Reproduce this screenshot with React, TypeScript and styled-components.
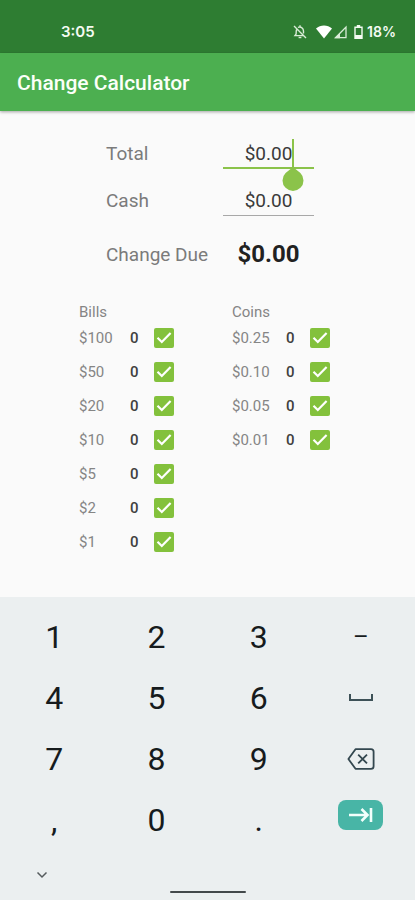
import React, { useState } from "react";
import styled, { createGlobalStyle } from "styled-components";

const GlobalStyle = createGlobalStyle`
  *, *::before, *::after { box-sizing: border-box; }
  body {
    margin: 0;
    background: #fafafa;
    color: #212121;
    font-family: Roboto, "Noto Sans", sans-serif;
  }
  button, input { font: inherit; color: inherit; }
`;

const Screen = styled.div`
  display: flex;
  flex-direction: column;
  min-height: 100vh;
`;

const StatusBar = styled.div`
  display: flex;
  align-items: center;
  justify-content: space-between;
  padding: 22px 19px 11px 61px;
  background: #2e7d32;
  color: #f4fbf2;
  font-family: Inter, Roboto, sans-serif;
  font-weight: 600;
  font-size: 15px;
  line-height: 20px;
`;

const StatusIcons = styled.div`
  display: flex;
  align-items: center;
  font-size: 14px;
`;

const StatusIcon = styled.svg<{ $gap: number }>`
  display: block;
  margin-right: ${({ $gap }) => $gap}px;
`;

const AppBar = styled.header`
  padding: 18px 17px 16px;
  background: #4caf50;
  box-shadow: 0 1px 3px rgba(0, 0, 0, 0.35);
`;

const Title = styled.h1`
  margin: 0;
  color: #fbfff8;
  font-size: 21px;
  font-weight: 500;
  line-height: 24px;
`;

const Content = styled.main`
  display: flex;
  flex-direction: column;
  align-items: center;
  gap: 36px;
  padding: 18px 16px 36px;
`;

const AmountForm = styled.form`
  display: grid;
  grid-template-columns: 117px 91px;
  row-gap: 7px;
  padding-left: 5px;
`;

const FormLabel = styled.label`
  padding-top: 13px;
  color: #7b7b7b;
  font-size: 19px;
  line-height: 24px;
`;

const DueLabel = styled.span`
  padding-top: 20px;
  color: #7b7b7b;
  font-size: 19px;
  line-height: 24px;
`;

const Field = styled.div<{ $active?: boolean }>`
  position: relative;
  height: 40px;
  padding-top: 11px;
  border-bottom: ${({ $active }) => ($active ? "2px solid #8bc34a" : "1px solid #a8a8a8")};
`;

const AmountInput = styled.input`
  display: block;
  width: 100%;
  height: 26px;
  padding: 0;
  border: 0;
  outline: 0;
  background: transparent;
  color: #3a3a3a;
  font-size: 19px;
  text-align: center;
  caret-color: transparent;
`;

const Caret = styled.span`
  position: absolute;
  top: 10px;
  right: 20px;
  width: 2px;
  height: 29px;
  background: #8bc34a;
`;

const CaretHandle = styled.svg`
  position: absolute;
  top: 38px;
  right: 10px;
  z-index: 1;
`;

const DueValue = styled.output`
  padding-top: 18px;
  font-size: 24px;
  font-weight: 700;
  line-height: 26px;
  text-align: center;
`;

const Breakdown = styled.div`
  display: flex;
  align-items: flex-start;
  gap: 58px;
  padding-right: 6px;
`;

const Group = styled.section`
  display: flex;
  flex-direction: column;
`;

const GroupTitle = styled.h2`
  margin: 0;
  color: #858585;
  font-size: 15px;
  font-weight: 400;
  line-height: 18px;
`;

const DenominationRow = styled.label<{ $wide?: boolean }>`
  display: grid;
  grid-template-columns: ${({ $wide }) => ($wide ? "54px 24px 20px" : "51px 24px 20px")};
  align-items: center;
  height: 34px;
  color: #858585;
  font-size: 15px;
`;

const Count = styled.span`
  color: #404040;
  font-size: 15px;
  font-weight: 500;
`;

const Tick = styled.span`
  display: grid;
  width: 20px;
  height: 20px;

  > * { grid-area: 1 / 1; }
  svg { pointer-events: none; }
  input:not(:checked) + svg { visibility: hidden; }
`;

const TickBox = styled.input`
  appearance: none;
  width: 20px;
  height: 20px;
  margin: 0;
  border: 2px solid #757575;
  border-radius: 2px;

  &:checked {
    border-color: #83c13c;
    background: #83c13c;
  }
`;

const Keyboard = styled.section`
  display: flex;
  flex-direction: column;
  margin-top: auto;
  padding: 9px 3px 7px;
  background: #ebeff0;
`;

const Keys = styled.div`
  display: grid;
  grid-template-columns: repeat(4, 1fr);
  grid-auto-rows: 61px;
`;

const Key = styled.button<{ $small?: boolean }>`
  display: flex;
  align-items: center;
  justify-content: center;
  padding: 0;
  border: 0;
  background: transparent;
  color: #161b1d;
  font-size: ${({ $small }) => ($small ? 24 : 32)}px;
  line-height: 38px;
`;

const NextKey = styled.button`
  display: flex;
  align-items: center;
  justify-content: center;
  place-self: start center;
  width: 45px;
  height: 30px;
  margin-top: 11px;
  padding: 0;
  border: 0;
  border-radius: 8px;
  background: #48b5a6;
`;

const HideKey = styled.button`
  display: flex;
  align-self: flex-start;
  margin: 16px 0 0 28px;
  padding: 5px;
  border: 0;
  background: transparent;
`;

const HomeBar = styled.div`
  align-self: center;
  width: 76px;
  height: 2px;
  margin-top: 7px;
  border-radius: 1px;
  background: #43494b;
`;

const bills = ["$100", "$50", "$20", "$10", "$5", "$2", "$1"];
const coins = ["$0.25", "$0.10", "$0.05", "$0.01"];

function Denomination({ name, wide }: { name: string; wide?: boolean }) {
  return (
    <DenominationRow $wide={wide}>
      <span>{name}</span>
      <Count>0</Count>
      <Tick>
        <TickBox type="checkbox" defaultChecked />
        <svg width="20" height="20" viewBox="0 0 20 20" fill="none" aria-hidden="true">
          <path d="M3.5 9.8 7.8 14 16.6 5" stroke="#fff" strokeWidth="2.2" />
        </svg>
      </Tick>
    </DenominationRow>
  );
}

function SpaceIcon() {
  return (
    <svg width="24" height="8" viewBox="0 0 24 8" fill="none" aria-hidden="true">
      <path d="M1 0v6h22V0" stroke="#3d5157" strokeWidth="2" />
    </svg>
  );
}

function BackspaceIcon() {
  return (
    <svg width="28" height="22" viewBox="0 0 28 22" fill="none" stroke="#33474f" aria-hidden="true">
      <path d="M8.5 1.2H24a2.6 2.6 0 0 1 2.6 2.6v14.4a2.6 2.6 0 0 1-2.6 2.6H8.5L1.4 11Z" strokeWidth="1.8" strokeLinejoin="round" />
      <path d="m11.2 6.6 8.8 8.8m0-8.8-8.8 8.8" strokeWidth="1.8" />
    </svg>
  );
}

function NextIcon() {
  return (
    <svg width="24" height="14" viewBox="0 0 24 14" fill="none" stroke="#f2fffc" strokeWidth="2.6" aria-hidden="true">
      <path d="M0 7h18M12.5 1l6 6-6 6M22 0v14" />
    </svg>
  );
}

export default function App() {
  const [total, setTotal] = useState("$0.00");
  const [cash, setCash] = useState("$0.00");

  return (
    <>
      <GlobalStyle />
      <Screen>
        <StatusBar>
          <span>3:05</span>
          <StatusIcons>
            <StatusIcon $gap={9} width="14" height="14" viewBox="0 0 14 14" fill="none" stroke="#d9ecd7" strokeWidth="1.4" aria-hidden="true">
              <path d="M1 1l12 12M3.6 4.5C3 6 3.3 8 3 9.3L2 10.6h8.5M5 2.5C7.5 1 10.5 3 10.5 6v2.5M7 .3v2" />
              <path d="M5.6 12.5h2.8" />
            </StatusIcon>
            <StatusIcon $gap={2} width="16" height="14" viewBox="0 0 16 14" fill="#fff" aria-hidden="true">
              <path d="M0 3.6C4.5-.4 11.5-.4 16 3.6L8 13.6Z" />
            </StatusIcon>
            <StatusIcon $gap={7} width="13" height="14" viewBox="0 0 13 14" fill="none" aria-hidden="true">
              <path d="M1.5 12.7 12 2v10.7Z" stroke="#d9ecd7" strokeWidth="1.3" />
              <path d="M.5 13.3 6 7.8v5.5Z" fill="#d9ecd7" />
            </StatusIcon>
            <StatusIcon $gap={4} width="9" height="14" viewBox="0 0 9 14" fill="none" aria-hidden="true">
              <path d="M1 2.2h7v11H1Z" stroke="#f4fbf2" strokeWidth="1.4" />
              <path d="M2.8 0h3.4v2H2.8ZM1 10h7v3.5H1Z" fill="#f4fbf2" />
            </StatusIcon>
            <span>18%</span>
          </StatusIcons>
        </StatusBar>
        <AppBar>
          <Title>Change Calculator</Title>
        </AppBar>

        <Content>
          <AmountForm>
            <FormLabel htmlFor="total">Total</FormLabel>
            <Field $active>
              <AmountInput id="total" inputMode="decimal" value={total} onChange={(e) => setTotal(e.target.value)} />
              <Caret />
              <CaretHandle width="22" height="24" viewBox="0 0 22 24" aria-hidden="true">
                <path d="M11 0 18.4 6A10.5 10.5 0 1 1 3.6 6Z" fill="#8bc34a" />
              </CaretHandle>
            </Field>
            <FormLabel htmlFor="cash">Cash</FormLabel>
            <Field>
              <AmountInput id="cash" inputMode="decimal" value={cash} onChange={(e) => setCash(e.target.value)} />
            </Field>
            <DueLabel>Change Due</DueLabel>
            <DueValue htmlFor="total cash">$0.00</DueValue>
          </AmountForm>

          <Breakdown>
            <Group>
              <GroupTitle>Bills</GroupTitle>
              {bills.map((name) => (
                <Denomination key={name} name={name} />
              ))}
            </Group>
            <Group>
              <GroupTitle>Coins</GroupTitle>
              {coins.map((name) => (
                <Denomination key={name} name={name} wide />
              ))}
            </Group>
          </Breakdown>
        </Content>

        <Keyboard aria-label="Number pad">
          <Keys>
            <Key type="button">1</Key>
            <Key type="button">2</Key>
            <Key type="button">3</Key>
            <Key type="button" $small>–</Key>
            <Key type="button">4</Key>
            <Key type="button">5</Key>
            <Key type="button">6</Key>
            <Key type="button" aria-label="Space"><SpaceIcon /></Key>
            <Key type="button">7</Key>
            <Key type="button">8</Key>
            <Key type="button">9</Key>
            <Key type="button" aria-label="Backspace"><BackspaceIcon /></Key>
            <Key type="button">,</Key>
            <Key type="button">0</Key>
            <Key type="button">.</Key>
            <NextKey type="button" aria-label="Next field"><NextIcon /></NextKey>
          </Keys>
          <HideKey type="button" aria-label="Hide keyboard">
            <svg width="12" height="8" viewBox="0 0 12 8" fill="none" aria-hidden="true">
              <path d="m1.5 1.5 4.5 4.5 4.5-4.5" stroke="#555b5d" strokeWidth="1.5" />
            </svg>
          </HideKey>
          <HomeBar />
        </Keyboard>
      </Screen>
    </>
  );
}
